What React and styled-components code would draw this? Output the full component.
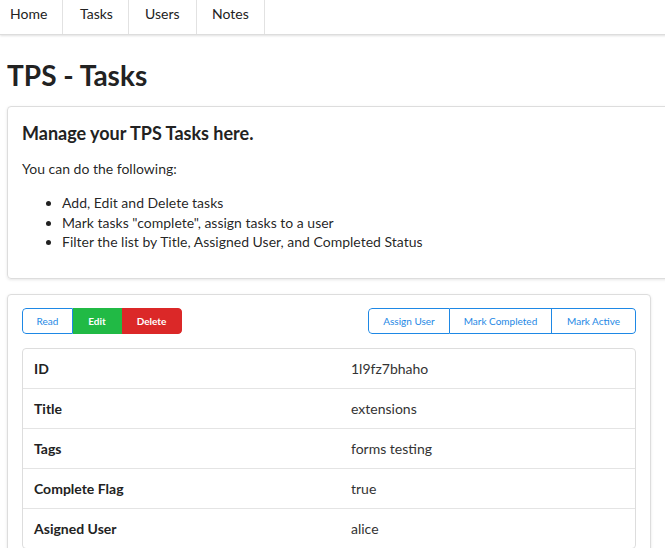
import React from "react";
import styled, { createGlobalStyle } from "styled-components";

const Global = createGlobalStyle`
  html, body { margin:0; padding:0; background:#fff; }
  body { font-family: Lato, "Open Sans", sans-serif; color:rgba(0,0,0,.87); font-size:14px; overflow:hidden; }
  * { box-sizing:border-box; }
`;

const rows = [
  ["ID", "1l9fz7bhaho"],
  ["Title", "extensions"],
  ["Tags", "forms testing"],
  ["Complete Flag", "true"],
  ["Asigned User", "alice"],
];

export default function App() {
  return (
    <Page>
      <Global />
      <Nav>
        {["Home", "Tasks", "Users", "Notes"].map((t) => (
          <NavItem key={t}>{t}</NavItem>
        ))}
      </Nav>

      <Main>
        <Title>TPS - Tasks</Title>

        <Card $wide>
          <CardHeading>Manage your TPS Tasks here.</CardHeading>
          <Para>You can do the following:</Para>
          <List>
            <li>Add, Edit and Delete tasks</li>
            <li>Mark tasks "complete", assign tasks to a user</li>
            <li>Filter the list by Title, Assigned User, and Completed Status</li>
          </List>
        </Card>

        <Card>
          <Toolbar>
            <BtnGroup>
              <Btn $kind="basic" $w={51}>Read</Btn>
              <Btn $kind="green" $w={49}>Edit</Btn>
              <Btn $kind="red" $w={60}>Delete</Btn>
            </BtnGroup>
            <BtnGroup>
              <Btn $kind="basic" $w={82}>Assign User</Btn>
              <Btn $kind="basic" $w={102}>Mark Completed</Btn>
              <Btn $kind="basic" $w={84}>Mark Active</Btn>
            </BtnGroup>
          </Toolbar>
          <Table>
            {rows.map(([k, v]) => (
              <Row key={k}>
                <Label>{k}</Label>
                <Value>{v}</Value>
              </Row>
            ))}
          </Table>
        </Card>
      </Main>
    </Page>
  );
}

/* styles */
const Page = styled.div` width:665px; `;

const Nav = styled.nav`
  display:flex; height:35px; width:700px;
  border-bottom:1px solid #ddd; box-shadow:0 1px 2px rgba(0,0,0,.12);
`;
const NavItem = styled.div`
  display:flex; align-items:center; padding:0 10px 7px; font-size:14px; color:#222;
  border-right:1px solid #e2e2e2;
  &:first-child{ padding-left:10px; width:63px; }
  &:nth-child(2){ width:66px; padding-left:17px; }
  &:nth-child(3){ width:68px; padding-left:16px; }
  &:nth-child(4){ width:68px; padding-left:15px; }
`;

const Main = styled.main` padding:0 7px; `;

const Title = styled.h1`
  font-size:28px; font-weight:700; margin:23px 0 14px; line-height:34px; color:#222;
`;

const Card = styled.section`
  width:${p => p.$wide ? "670px" : "644px"};
  border:1px solid #ddd; border-radius:4px;
  box-shadow:0 1px 3px rgba(0,0,0,.1);
  padding:${p => p.$wide ? "14px 14px 26px" : "13px 14px 0"};
  margin-bottom:15px; overflow:hidden;
  ${p => p.$wide ? "" : "height:280px;"}
`;

const CardHeading = styled.h2`
  font-size:18px; font-weight:700; margin:0 0 14px; line-height:24px; color:#222;
`;
const Para = styled.p` margin:0 0 14px; line-height:20px; font-size:14px; `;
const List = styled.ul`
  margin:0; padding-left:40px; line-height:19.5px; font-size:14px;
  li{ padding-left:0; }
`;

const Toolbar = styled.div`
  display:flex; justify-content:space-between; align-items:center; margin:0 0 14px;
`;
const BtnGroup = styled.div` display:flex; border-radius:4px; overflow:hidden; `;
const colors = {
  basic: { bg: "#fff", fg: "#1e88e5", bd: "#1e88e5" },
  green: { bg: "#21ba45", fg: "#fff", bd: "#21ba45" },
  red: { bg: "#db2828", fg: "#fff", bd: "#db2828" },
};
const Btn = styled.button`
  width:${p => p.$w}px; height:26px; font-family:Lato, sans-serif; font-size:10px; font-weight:${p => p.$kind === "basic" ? 400 : 700};
  background:${p => colors[p.$kind].bg}; color:${p => colors[p.$kind].fg};
  border:1px solid ${p => colors[p.$kind].bd}; padding:0; cursor:pointer;
  &:first-child{ border-radius:4px 0 0 4px; }
  &:last-child{ border-radius:0 4px 4px 0; }
  & + &{ border-left:${p => p.$kind === "basic" ? "0" : ""}; }
`;

const Table = styled.div`
  border:1px solid #ddd; border-radius:4px; width:614px;
`;
const Row = styled.div`
  display:grid; grid-template-columns:328px 1fr; height:40px; align-items:center;
  border-top:1px solid #e4e4e4;
  &:first-child{ border-top:0; height:39px; }
`;
const Label = styled.div` padding-left:11px; font-weight:700; font-size:14px; color:#222; `;
const Value = styled.div` font-size:14px; color:#333; `;
